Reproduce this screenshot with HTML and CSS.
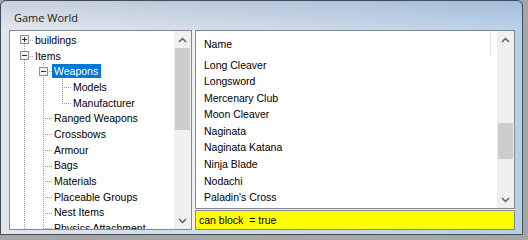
FILE: index.html
```html
<!DOCTYPE html>
<html>
<head>
<meta charset="utf-8">
<title>Game World</title>
<link rel="stylesheet" href="styles.css">
</head>
<body>
<div class="window">
  <div class="titlebar"><span class="title">Game World</span></div>
  <div class="frame">
    <div class="client">
      <div class="tree">
        <div class="tree-content">
          <div class="row"><span class="cell c-first"><svg class="exp" width="9" height="9" viewBox="0 0 9 9"><rect x="0.5" y="0.5" width="8" height="8" fill="#f2f2f2" stroke="#8e8f8f"/><path d="M2 4.5H7M4.5 2V7" stroke="#22304a" stroke-width="1"/></svg></span><span class="label">buildings</span></div>
          <div class="row"><span class="cell c-tee"><svg class="exp" width="9" height="9" viewBox="0 0 9 9"><rect x="0.5" y="0.5" width="8" height="8" fill="#f2f2f2" stroke="#8e8f8f"/><path d="M2 4.5H7" stroke="#22304a" stroke-width="1"/></svg></span><span class="label">Items</span></div>
          <div class="row"><span class="cell c-pipe"></span><span class="cell c-tee"><svg class="exp" width="9" height="9" viewBox="0 0 9 9"><rect x="0.5" y="0.5" width="8" height="8" fill="#f2f2f2" stroke="#8e8f8f"/><path d="M2 4.5H7" stroke="#22304a" stroke-width="1"/></svg></span><span class="label selected">Weapons</span></div>
          <div class="row"><span class="cell c-pipe"></span><span class="cell c-pipe"></span><span class="cell c-tee"></span><span class="label">Models</span></div>
          <div class="row"><span class="cell c-pipe"></span><span class="cell c-pipe"></span><span class="cell c-elbow"></span><span class="label">Manufacturer</span></div>
          <div class="row"><span class="cell c-pipe"></span><span class="cell c-tee"></span><span class="label">Ranged Weapons</span></div>
          <div class="row"><span class="cell c-pipe"></span><span class="cell c-tee"></span><span class="label">Crossbows</span></div>
          <div class="row"><span class="cell c-pipe"></span><span class="cell c-tee"></span><span class="label">Armour</span></div>
          <div class="row"><span class="cell c-pipe"></span><span class="cell c-tee"></span><span class="label">Bags</span></div>
          <div class="row"><span class="cell c-pipe"></span><span class="cell c-tee"></span><span class="label">Materials</span></div>
          <div class="row"><span class="cell c-pipe"></span><span class="cell c-tee"></span><span class="label">Placeable Groups</span></div>
          <div class="row"><span class="cell c-pipe"></span><span class="cell c-tee"></span><span class="label">Nest Items</span></div>
          <div class="row"><span class="cell c-pipe"></span><span class="cell c-tee"></span><span class="label">Physics Attachment</span></div>
        </div>
        <div class="vscroll">
          <div class="arrow"><svg width="9" height="6" viewBox="0 0 9 6"><polyline points="1,5 4.5,1.5 8,5" fill="none" stroke="#606060" stroke-width="1.5"/></svg></div>
          <div class="track"><div class="thumb tree-thumb"></div></div>
          <div class="arrow"><svg width="9" height="6" viewBox="0 0 9 6"><polyline points="1,1 4.5,4.5 8,1" fill="none" stroke="#606060" stroke-width="1.5"/></svg></div>
        </div>
      </div>
      <div class="right">
        <div class="list">
          <div class="list-content">
            <div class="header"><span class="col">Name</span></div>
            <div class="item">Long Cleaver</div>
            <div class="item">Longsword</div>
            <div class="item">Mercenary Club</div>
            <div class="item">Moon Cleaver</div>
            <div class="item">Naginata</div>
            <div class="item">Naginata Katana</div>
            <div class="item">Ninja Blade</div>
            <div class="item">Nodachi</div>
            <div class="item">Paladin's Cross</div>
          </div>
          <div class="vscroll">
            <div class="arrow"><svg width="9" height="6" viewBox="0 0 9 6"><polyline points="1,5 4.5,1.5 8,5" fill="none" stroke="#606060" stroke-width="1.5"/></svg></div>
            <div class="track"><div class="spacer list-spacer"></div><div class="thumb list-thumb"></div></div>
            <div class="arrow"><svg width="9" height="6" viewBox="0 0 9 6"><polyline points="1,1 4.5,4.5 8,1" fill="none" stroke="#606060" stroke-width="1.5"/></svg></div>
          </div>
        </div>
        <div class="status">can block  = true</div>
      </div>
    </div>
  </div>
</div>
</body>
</html>
```

FILE: styles.css
```css
* { box-sizing: border-box; margin: 0; padding: 0; }
html, body { width: 528px; height: 240px; overflow: hidden; }
body {
  background: #a6a6a6;
  font-family: "Liberation Sans", Arial, sans-serif;
  font-size: 10.5px;
  color: #000;
}
.window {
  width: 523px;
  height: 235px;
  display: flex;
  flex-direction: column;
  border: 1px solid #3d4d59;
  border-radius: 6px 6px 0 0;
  background: linear-gradient(to right, #e1e6ec 0%, #cfdbe8 45%, #b7cfe9 100%);
  overflow: hidden;
}
.titlebar {
  height: 29px;
  flex: none;
  display: flex;
  align-items: center;
  padding-left: 13px;
  padding-top: 3px;
  background: linear-gradient(to bottom, rgba(70, 100, 135, 0.16), rgba(255, 255, 255, 0.05));
}
.title {
  font-family: "Open Sans", "Noto Sans", sans-serif;
  font-size: 11px;
  color: #1b1b1b;
}
.frame {
  flex: 1;
  min-height: 0;
  display: flex;
  padding: 0 7px 4px 8px;
}
.client {
  flex: 1;
  display: flex;
  gap: 3px;
  background: #f0f0f0;
}
.tree {
  width: 183px;
  flex: none;
  display: flex;
  border: 1px solid #828790;
  background: #fff;
}
.tree-content {
  flex: 1;
  overflow: hidden;
  padding-top: 1px;
  padding-left: 5px;
}
.row {
  height: 15.7px;
  display: flex;
  align-items: stretch;
  white-space: nowrap;
}
.cell {
  width: 19px;
  flex: none;
  display: flex;
  align-items: center;
  justify-content: center;
  background-repeat: no-repeat;
}
.exp { display: block; }
.c-pipe {
  background-image: repeating-linear-gradient(to bottom, #a0a0a0 0 1px, transparent 1px 2px);
  background-size: 1px 100%;
  background-position: 9px 0;
}
.c-tee {
  background-image:
    repeating-linear-gradient(to bottom, #a0a0a0 0 1px, transparent 1px 2px),
    repeating-linear-gradient(to right, #a0a0a0 0 1px, transparent 1px 2px);
  background-size: 1px 100%, 10px 1px;
  background-position: 9px 0, 9px 8px;
}
.c-elbow {
  background-image:
    repeating-linear-gradient(to bottom, #a0a0a0 0 1px, transparent 1px 2px),
    repeating-linear-gradient(to right, #a0a0a0 0 1px, transparent 1px 2px);
  background-size: 1px 8px, 10px 1px;
  background-position: 9px 0, 9px 8px;
}
.c-first {
  background-image:
    repeating-linear-gradient(to bottom, #a0a0a0 0 1px, transparent 1px 2px),
    repeating-linear-gradient(to right, #a0a0a0 0 1px, transparent 1px 2px);
  background-size: 1px 8px, 10px 1px;
  background-position: 9px 100%, 9px 8px;
}
.label {
  padding-left: 1px;
  display: flex;
  align-items: center;
}
.label.selected {
  align-self: center;
  height: 14px;
  margin-left: -1px;
  padding: 0 3px 0 2px;
  background: #0078d7;
  color: #fff;
}
.vscroll {
  width: 17px;
  flex: none;
  display: flex;
  flex-direction: column;
  background: #f0f0f0;
}
.arrow {
  height: 17px;
  flex: none;
  display: flex;
  align-items: center;
  justify-content: center;
}
.arrow svg { display: block; }
.track {
  flex: 1;
  display: flex;
  flex-direction: column;
  align-items: center;
}
.thumb {
  width: 15px;
  background: #cdcdcd;
  flex: none;
}
.tree-thumb { height: 82px; }
.list-spacer { height: 75px; flex: none; }
.list-thumb { height: 36px; }
.right {
  flex: 1;
  display: flex;
  flex-direction: column;
  gap: 1px;
}
.list {
  flex: 1;
  min-height: 0;
  display: flex;
  border: 1px solid #828790;
  background: #fff;
}
.list-content {
  flex: 1;
  overflow: hidden;
}
.header {
  height: 25.5px;
  display: flex;
}
.col {
  width: 295px;
  border-right: 1px solid #e5e5e5;
  padding-left: 8px;
  display: flex;
  align-items: center;
}
.item {
  height: 16.6px;
  line-height: 16.6px;
  padding-left: 8px;
  white-space: nowrap;
}
.status {
  height: 20px;
  flex: none;
  border: 1px solid #828790;
  background: #ffff00;
  padding-left: 3px;
  display: flex;
  align-items: center;
  white-space: pre;
}
```
